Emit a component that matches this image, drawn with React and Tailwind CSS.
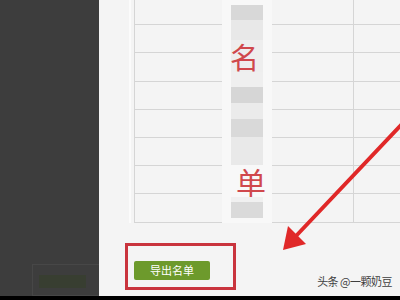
import React from 'react'

const rowHeights = [25, 28, 29, 28, 28, 28, 28, 29]

function Lines({ className = '', lineColor = 'border-[#d5d5d5]' }) {
  return (
    <div className={'flex flex-col ' + className}>
      {rowHeights.map((h, i) => (
        <div key={i} className={'border-b ' + lineColor} style={{ height: h }} />
      ))}
    </div>
  )
}

function Mosaic() {
  const cjk = { fontFamily: '"Noto Sans CJK SC", "Noto Sans", sans-serif' }
  return (
    <div className="w-[50px] h-[223px] flex flex-col pl-[9px] pt-[5px] bg-[#f8f8f8]">
      <div className="w-[32px] h-[15px] bg-[#d8d8d8]" />
      <div className="w-[32px] h-[20px] bg-[#e8e8e8]" />
      <div className="w-[32px] h-[32px] bg-[#eeeeee] flex items-center justify-start">
        <span className="text-[29px] leading-none text-[#d0484c] -ml-[1px]" style={cjk}>名</span>
      </div>
      <div className="w-[32px] h-[15px] bg-[#efefef]" />
      <div className="w-[32px] h-[16px] bg-[#d6d6d6]" />
      <div className="w-[32px] h-[16px] bg-[#ebebeb]" />
      <div className="w-[32px] h-[18px] bg-[#d9d9d9]" />
      <div className="w-[32px] h-[28px] bg-[#e9e9e9]" />
      <div className="w-[40px] h-[32px] flex items-center justify-center">
        <span className="text-[30px] leading-none text-[#d0484c]" style={cjk}>单</span>
      </div>
      <div className="w-[32px] h-[5px] bg-[#f0f0f0]" />
      <div className="w-[32px] h-[16px] bg-[#dadada]" />
    </div>
  )
}

export default function App() {
  const cjk = { fontFamily: '"Noto Sans CJK SC", "Noto Sans", sans-serif' }
  return (
    <div className="relative w-[400px] h-[300px] overflow-hidden flex flex-col">
      <div className="flex h-[296px]">
        <div className="w-[99px] bg-[#3d3d3d] flex flex-col justify-end pl-[32px]">
          <div className="h-[32px] border border-[#474747] border-r-0 pl-[6px] pt-[10px]">
            <div className="w-[47px] h-[13px] bg-[#383e31]" />
          </div>
        </div>
        <div className="flex-1 bg-[#f4f4f4] flex flex-col">
          <div className="flex pl-[30px]">
            <div className="w-[2px] bg-[#fbfbfb] mr-[3px]" />
            <div className="flex border-l border-[#d5d5d5]">
              <Lines className="w-[87px]" />
              <Mosaic />
              <Lines className="w-[81px]" />
              <Lines className="w-[47px] border-l border-[#d5d5d5]" />
            </div>
          </div>
          <div className="flex justify-between items-start mt-[20px]">
            <div className="ml-[26px] w-[111px] h-[47px] border-[3px] border-[#c9343d] pl-[6px] pt-[15px]">
              <div
                className="w-[76px] h-[19px] rounded-[2px] bg-[#6d9a2c] text-white text-[11px] flex items-center justify-center"
                style={cjk}
              >
                导出名单
              </div>
            </div>
            <div className="mt-[32px] mr-[8px] text-[11px] leading-[13px] tracking-[-0.5px] text-[#3f3f3f]" style={cjk}>
              头条 @一颗奶豆
            </div>
          </div>
        </div>
      </div>
      <div className="h-[4px] bg-black" />
      <svg className="absolute inset-0 pointer-events-none" width="400" height="300" viewBox="0 0 400 300">
        <line x1="402" y1="124" x2="296" y2="236" stroke="#e02828" strokeWidth="4" strokeLinecap="round" />
        <polygon points="283,250 288,226 306,244" fill="#e02828" />
      </svg>
    </div>
  )
}
